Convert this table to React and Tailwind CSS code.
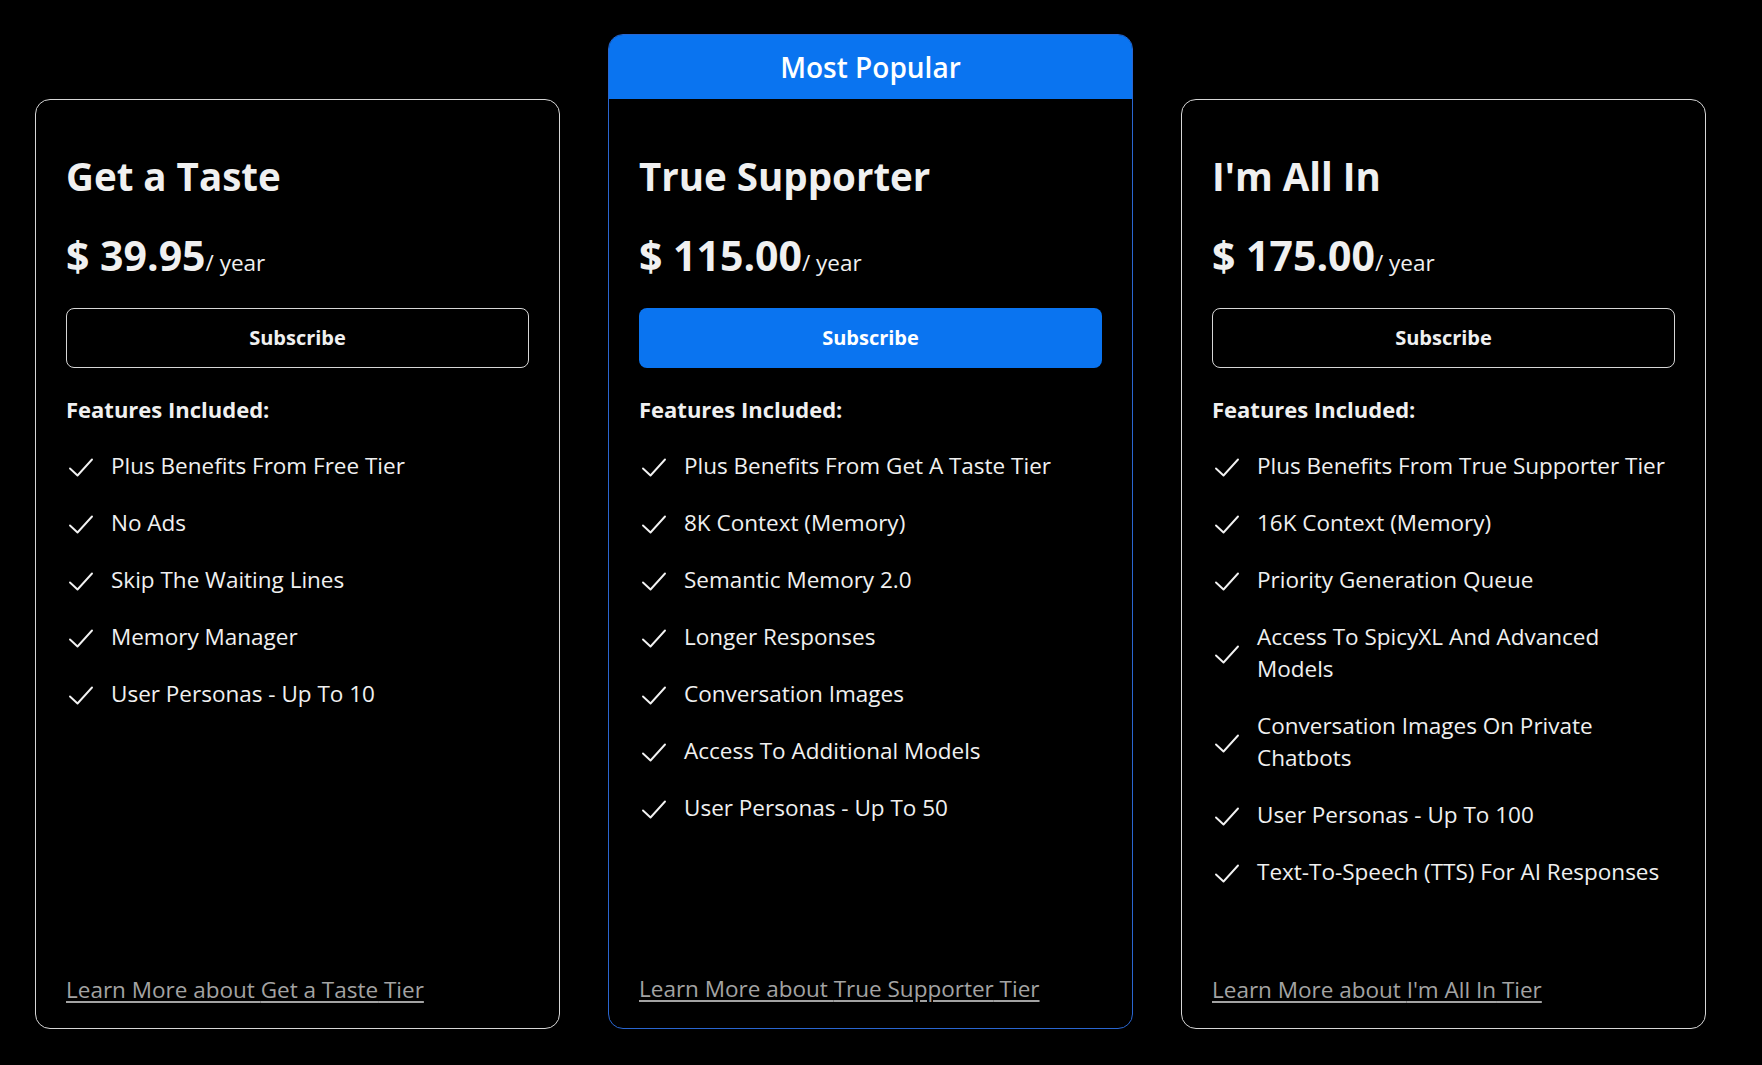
import React from "react";

const tiers = [
  {
    name: "Get a Taste",
    price: "39.95",
    features: [
      "Plus Benefits From Free Tier",
      "No Ads",
      "Skip The Waiting Lines",
      "Memory Manager",
      "User Personas - Up To 10",
    ],
  },
  {
    name: "True Supporter",
    price: "115.00",
    popular: true,
    features: [
      "Plus Benefits From Get A Taste Tier",
      "8K Context (Memory)",
      "Semantic Memory 2.0",
      "Longer Responses",
      "Conversation Images",
      "Access To Additional Models",
      "User Personas - Up To 50",
    ],
  },
  {
    name: "I'm All In",
    price: "175.00",
    features: [
      "Plus Benefits From True Supporter Tier",
      "16K Context (Memory)",
      "Priority Generation Queue",
      "Access To SpicyXL And Advanced Models",
      "Conversation Images On Private Chatbots",
      "User Personas - Up To 100",
      "Text-To-Speech (TTS) For AI Responses",
    ],
  },
];

const Check = () => (
  <svg
    viewBox="0 0 24 19"
    className="w-[24px] h-[19px] shrink-0 mt-[3px]"
    fill="none"
    stroke="#f2f2f2"
    strokeWidth="1.9"
    strokeLinecap="round"
    strokeLinejoin="round"
  >
    <polyline points="1,10.5 8.5,17.5 23,1.5" />
  </svg>
);

const TierCard = ({ tier }) => {
  return (
    <div
      className={
        tier.popular
          ? "flex flex-col w-[525px] rounded-[15px] border border-[#2a66d0] overflow-hidden"
          : "flex flex-col w-[525px] h-[930px] rounded-[15px] border border-[#d6d6d6]"
      }
    >
      {tier.popular && (
        <div className="h-[65px] -mt-px -mx-px bg-[#0a74f0] flex items-center justify-center text-[28px] font-semibold text-white">
          Most Popular
        </div>
      )}
      <div
        className={
          tier.popular
            ? "flex flex-col h-[929px] px-[30px] pt-[53px] pb-[23px]"
            : "flex flex-col flex-1 px-[30px] pt-[52px] pb-[22px]"
        }
      >
        <h2 className="text-[38.5px] leading-[48px] font-bold text-[#f0f0f0]">{tier.name}</h2>

        <div className="mt-[31px] text-[41px] leading-[48px] font-bold text-[#f0f0f0]">
          <span>$ {tier.price}</span>
          <span className="text-[22.5px] leading-none font-normal">/ year</span>
        </div>

        <button
          className={
            tier.popular
              ? "mt-[29px] h-[60px] w-full rounded-[8px] bg-[#0a74f0] text-white text-[20px] font-bold"
              : "mt-[29px] h-[60px] w-full rounded-[8px] border border-[#d6d6d6] text-[#f0f0f0] text-[20px] font-bold"
          }
        >
          Subscribe
        </button>

        <h3 className="mt-[27px] text-[22px] leading-[28px] font-bold text-[#f0f0f0]">Features Included:</h3>

        <ul className="mt-[27px] flex flex-col gap-[25px]">
          {tier.features.map((f) => (
            <li key={f} className="flex items-center gap-[18px] pl-[3px]">
              <Check />
              <span className="text-[22.5px] leading-[32px] text-[#f0f0f0]">{f}</span>
            </li>
          ))}
        </ul>

        <a href="#" className="mt-auto text-[22.5px] leading-[32px] text-[#a3a3a3] underline underline-offset-[3px]">
          Learn More about {tier.name} Tier
        </a>
      </div>
    </div>
  );
};

const App = () => {
  return (
    <div
      className="min-h-screen bg-black pl-[35px] pt-[34px]"
      style={{ fontFamily: '"Open Sans", "Noto Sans", sans-serif' }}
    >
      <div className="flex items-end gap-[48px]">
        {tiers.map((t) => (
          <TierCard key={t.name} tier={t} />
        ))}
      </div>
    </div>
  );
};

export default App;
